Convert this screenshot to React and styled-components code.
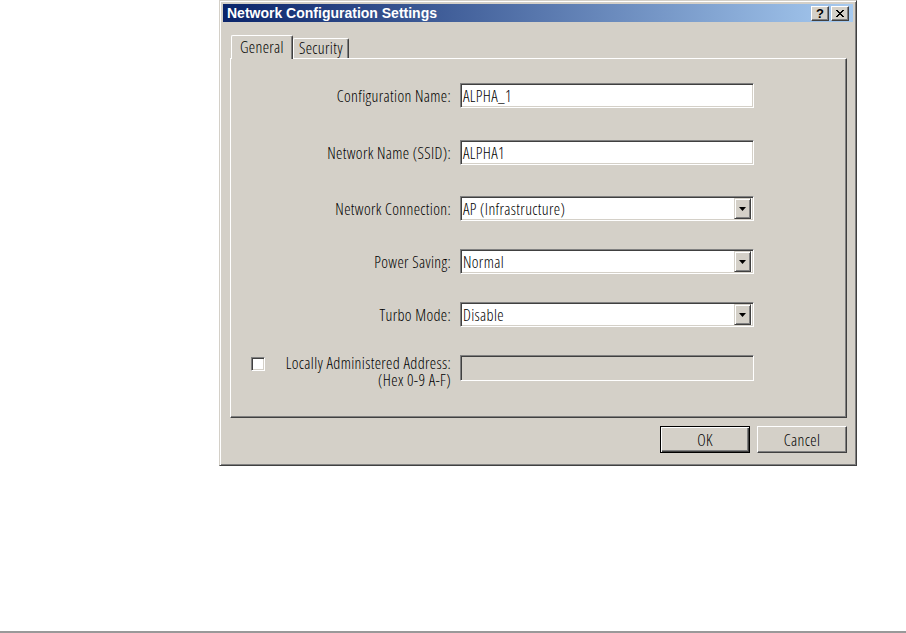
import React from "react";
import styled, { createGlobalStyle } from "styled-components";

const GlobalStyle = createGlobalStyle`
  html, body { margin: 0; padding: 0; background: #ffffff; }
  body {
    font-family: "Open Sans", "Liberation Sans", Arial, sans-serif;
    font-stretch: 75%;
    font-weight: 300;
    font-size: 16px;
    letter-spacing: 0.35px;
    color: #000;
  }
  * { box-sizing: border-box; }
`;

const Page = styled.div`
  width: 906px;
  height: 633px;
  display: flex;
  flex-direction: column;
`;

const DialogRow = styled.div`
  padding-left: 219px;
`;

const Dialog = styled.div`
  width: 638px;
  height: 466px;
  background: #d4d0c8;
  border: 1px solid;
  border-color: #d4d0c8 #404040 #404040 #d4d0c8;
  box-shadow: inset 1px 1px 0 #ffffff, inset -1px -1px 0 #808080;
  padding: 3px;
  display: flex;
  flex-direction: column;
`;

const TitleBar = styled.div`
  height: 18px;
  background: linear-gradient(to right, #0a246a, #a6caf0);
  display: flex;
  align-items: center;
  padding: 0 4px 0 4px;
  color: #ffffff;
  font-family: "Liberation Sans", Arial, sans-serif;
  font-stretch: normal;
  font-weight: bold;
  font-size: 14px;
  letter-spacing: 0;
`;

const TitleText = styled.span`
  flex: 1;
  white-space: nowrap;
`;

const TitleButtons = styled.div`
  display: flex;
  gap: 2px;
`;

const CaptionButton = styled.div`
  width: 18px;
  height: 15px;
  background: #d4d0c8;
  border: 1px solid;
  border-color: #ffffff #404040 #404040 #ffffff;
  box-shadow: inset -1px -1px 0 #808080;
  display: flex;
  align-items: center;
  justify-content: center;
  color: #000;
  font-family: "Liberation Sans", Arial, sans-serif;
  font-stretch: normal;
  font-weight: bold;
  font-size: 13px;
  line-height: 1;
`;

const Body = styled.div`
  flex: 1;
  display: flex;
  flex-direction: column;
  padding: 13px 6px 0 7px;
`;

const TabStrip = styled.div`
  height: 23px;
  display: flex;
  align-items: flex-end;
  padding-left: 1px;
  position: relative;
  z-index: 1;
`;

const Tab = styled.div`
  height: ${(p) => (p.$active ? "24px" : "20px")};
  margin-bottom: ${(p) => (p.$active ? "-1px" : "0")};
  padding: ${(p) => (p.$active ? "2px 8px 0 8px" : "0 5px 0 5px")};
  background: #d4d0c8;
  border: 1px solid;
  border-bottom: none;
  border-color: #ffffff #404040 #404040 #ffffff;
  box-shadow: inset -1px 0 0 #808080;
  border-radius: 2px 2px 0 0;
  white-space: nowrap;
  line-height: 19px;
`;

const Panel = styled.div`
  width: 617px;
  height: 360px;
  border: 1px solid;
  border-color: #ffffff #404040 #404040 #ffffff;
  box-shadow: inset -1px -1px 0 #808080;
  display: flex;
  flex-direction: column;
  padding-right: 92px;
`;

const FieldRow = styled.div`
  margin-top: ${(p) => p.$mt}px;
  display: grid;
  grid-template-columns: minmax(0, 1fr) 294px;
  column-gap: 9px;
  align-items: ${(p) => (p.$top ? "start" : "center")};
`;

const Label = styled.div`
  text-align: right;
  white-space: nowrap;
  line-height: 18px;
`;

const TextBox = styled.div`
  height: ${(p) => p.$h || 25}px;
  background: ${(p) => (p.$disabled ? "#d4d0c8" : "#ffffff")};
  border: 1px solid;
  border-color: #808080 #ffffff #ffffff #808080;
  box-shadow: inset 1px 1px 0 #404040, inset -1px -1px 0 #d4d0c8;
  display: flex;
  align-items: center;
  padding: 0 2px;
  white-space: nowrap;
`;

const SelectBox = styled(TextBox)`
  padding-right: 2px;
`;

const SelectValue = styled.span`
  flex: 1;
`;

const DropButton = styled.div`
  width: 17px;
  height: 21px;
  background: #d4d0c8;
  border: 1px solid;
  border-color: #d4d0c8 #404040 #404040 #d4d0c8;
  box-shadow: inset 1px 1px 0 #ffffff, inset -1px -1px 0 #808080;
  display: flex;
  align-items: center;
  justify-content: center;
`;

const CheckLabel = styled.div`
  display: flex;
  align-items: flex-start;
  padding-left: 20px;
`;

const CheckBox = styled.div`
  width: 14px;
  height: 14px;
  margin-top: 2px;
  background: #ffffff;
  border: 1px solid;
  border-color: #808080 #ffffff #ffffff #808080;
  box-shadow: inset 1px 1px 0 #404040, inset -1px -1px 0 #d4d0c8;
`;

const CheckText = styled.div`
  flex: 1;
  display: flex;
  flex-direction: column;
  align-items: flex-end;
`;

const CheckLine = styled.div`
  white-space: nowrap;
  height: 17px;
  line-height: 17px;
`;

const ButtonRow = styled.div`
  display: flex;
  justify-content: flex-end;
  gap: 7px;
  margin-top: 8px;
`;

const Button = styled.div`
  width: 90px;
  height: 27px;
  background: #d4d0c8;
  border: 1px solid;
  border-color: ${(p) =>
    p.$default ? "#000000" : "#ffffff #404040 #404040 #ffffff"};
  box-shadow: ${(p) =>
    p.$default
      ? "inset 1px 1px 0 #ffffff, inset -1px -1px 0 #404040, inset -2px -2px 0 #808080"
      : "inset -1px -1px 0 #808080"};
  display: flex;
  align-items: center;
  justify-content: center;
`;

const BottomRule = styled.div`
  margin-top: auto;
  margin-bottom: 0;
  height: 2px;
  background: #999999;
`;

const Arrow = () => (
  <svg width="7" height="4" viewBox="0 0 7 4">
    <path d="M0 0h7L3.5 4z" fill="#000" />
  </svg>
);

const CloseGlyph = () => (
  <svg width="8" height="7" viewBox="0 0 8 7" shapeRendering="crispEdges">
    <path
      d="M0 0h2v1h1v1h2V1h1V0h2v1H7v1H6v1H5v1h1v1h1v1h1v1H6V6H5V5H3v1H2v1H0V6h1V5h1V4h1V3H2V2H1V1H0z"
      fill="#000"
    />
  </svg>
);

const Select = ({ value }) => (
  <SelectBox>
    <SelectValue>{value}</SelectValue>
    <DropButton>
      <Arrow />
    </DropButton>
  </SelectBox>
);

export default function App() {
  return (
    <>
      <GlobalStyle />
      <Page>
        <DialogRow>
          <Dialog>
            <TitleBar>
              <TitleText>Network Configuration Settings</TitleText>
              <TitleButtons>
                <CaptionButton>?</CaptionButton>
                <CaptionButton>
                  <CloseGlyph />
                </CaptionButton>
              </TitleButtons>
            </TitleBar>
            <Body>
              <TabStrip>
                <Tab $active>General</Tab>
                <Tab>Security</Tab>
              </TabStrip>
              <Panel>
                <FieldRow $mt={24}>
                  <Label>Configuration Name:</Label>
                  <TextBox>ALPHA_1</TextBox>
                </FieldRow>
                <FieldRow $mt={32}>
                  <Label>Network Name (SSID):</Label>
                  <TextBox>ALPHA1</TextBox>
                </FieldRow>
                <FieldRow $mt={31}>
                  <Label>Network Connection:</Label>
                  <Select value="AP (Infrastructure)" />
                </FieldRow>
                <FieldRow $mt={28}>
                  <Label>Power Saving:</Label>
                  <Select value="Normal" />
                </FieldRow>
                <FieldRow $mt={28}>
                  <Label>Turbo Mode:</Label>
                  <Select value="Disable" />
                </FieldRow>
                <FieldRow $mt={28} $top>
                  <CheckLabel>
                    <CheckBox />
                    <CheckText>
                      <CheckLine>Locally Administered Address:</CheckLine>
                      <CheckLine>(Hex 0-9 A-F)</CheckLine>
                    </CheckText>
                  </CheckLabel>
                  <TextBox $h={26} $disabled />
                </FieldRow>
              </Panel>
              <ButtonRow>
                <Button $default>OK</Button>
                <Button>Cancel</Button>
              </ButtonRow>
            </Body>
          </Dialog>
        </DialogRow>
        <BottomRule />
      </Page>
    </>
  );
}
